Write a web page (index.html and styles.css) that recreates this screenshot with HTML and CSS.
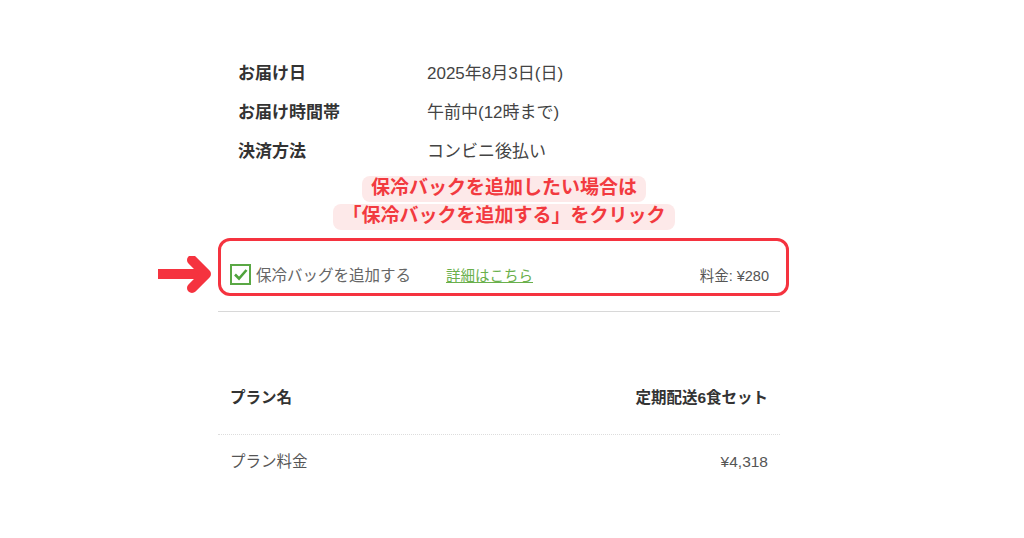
FILE: index.html
```html
<!DOCTYPE html>
<html lang="ja">
<head>
    <meta charset="UTF-8">
    <meta name="viewport" content="width=device-width, initial-scale=1.0">
    <title>ご注文内容の確認</title>
    <link rel="stylesheet" href="styles.css">
</head>

<body>
    <div class="column">
        <!-- お届け情報 -->
        <dl class="details">
            <div class="detail-row">
                <dt>お届け日</dt>
                <dd>2025年8月3日(日)</dd>
            </div>
            <div class="detail-row">
                <dt>お届け時間帯</dt>
                <dd>午前中(12時まで)</dd>
            </div>
            <div class="detail-row">
                <dt>決済方法</dt>
                <dd>コンビニ後払い</dd>
            </div>
        </dl>

        <!-- 注釈 -->
        <p class="callout"><span class="callout-text">保冷バックを追加したい場合は<br>「保冷バックを追加する」をクリック</span></p>

        <div class="bag-wrap">
            <svg class="arrow" width="56" height="40" viewBox="0 0 56 40">
                <line x1="2" y1="18" x2="44" y2="18" stroke="#f5333f" stroke-width="10" />
                <polyline points="36,4 50,18 36,32" fill="none" stroke="#f5333f" stroke-width="10" stroke-linecap="round" stroke-linejoin="round" />
            </svg>
            <div class="bag-box">
                <label class="bag-option">
                    <span class="check">
                        <svg width="15" height="15" viewBox="0 0 15 15">
                            <polyline points="2,7.5 6,11.5 13.5,3" fill="none" stroke="#4fa33c" stroke-width="2.6" />
                        </svg>
                    </span>
                    保冷バッグを追加する
                </label>
                <a class="more" href="#">詳細はこちら</a>
                <span class="fee">料金: ¥280</span>
            </div>
        </div>

        <hr class="divider">

        <!-- プラン -->
        <div class="plan">
            <div class="plan-row plan-head">
                <span>プラン名</span>
                <span>定期配送6食セット</span>
            </div>
            <div class="plan-row plan-price">
                <span>プラン料金</span>
                <span>¥4,318</span>
            </div>
        </div>
    </div>
</body>
</html>
```

FILE: styles.css
```css
body {
    margin: 0;
    background-color: #ffffff;
    color: #333;
    font-family: 'Liberation Sans', 'Noto Sans CJK JP', sans-serif;
}

.column {
    width: 562px;
    margin-left: 218px;
    padding-top: 52px;
}

/* お届け情報 */
.details {
    margin: 0;
    padding-left: 20px;
}

.detail-row {
    display: flex;
    height: 39px;
    align-items: center;
    font-size: 17px;
}

.detail-row dt {
    width: 189px;
    font-weight: bold;
    color: #333;
}

.detail-row dd {
    margin: 0;
    color: #444;
}

/* 注釈 */
.callout {
    margin: 5px 0 0;
    padding-left: 10px;
    text-align: center;
    font-size: 19px;
    line-height: 28px;
    font-weight: bold;
    color: #f23a3f;
}

.callout-text {
    background-color: #fde9e9;
    padding: 1px 9px 4px;
    border-radius: 8px;
    -webkit-box-decoration-break: clone;
    box-decoration-break: clone;
}

/* 保冷バッグ */
.bag-wrap {
    position: relative;
    margin-top: 8px;
}

.arrow {
    position: absolute;
    left: -62px;
    top: 18px;
}

.bag-box {
    display: flex;
    align-items: center;
    width: 571px;
    height: 58px;
    box-sizing: border-box;
    border: 3px solid #f5333f;
    border-radius: 12px;
    padding: 14px 17px 0 9px;
    font-size: 14.5px;
}

.bag-option {
    display: flex;
    align-items: center;
    gap: 5px;
    color: #666;
    font-size: 15.5px;
    width: 216px;
}

.check {
    display: flex;
    align-items: center;
    justify-content: center;
    width: 17px;
    height: 17px;
    border: 2px solid #5aa845;
}

.more {
    color: #6ab04c;
    text-decoration: underline;
}

.fee {
    margin-left: auto;
    color: #555;
}

.divider {
    border: none;
    border-top: 1px solid #d8d8d8;
    margin: 15px 0 0;
}

/* プラン */
.plan {
    margin-top: 66px;
}

.plan-row {
    display: flex;
    justify-content: space-between;
    padding: 0 12px;
    font-size: 15.5px;
}

.plan-head {
    font-weight: bold;
    color: #333;
    height: 56px;
    line-height: 40px;
    border-bottom: 1px dotted #ddd;
}

.plan-price {
    color: #555;
    padding-top: 13px;
    line-height: 28px;
}
```
